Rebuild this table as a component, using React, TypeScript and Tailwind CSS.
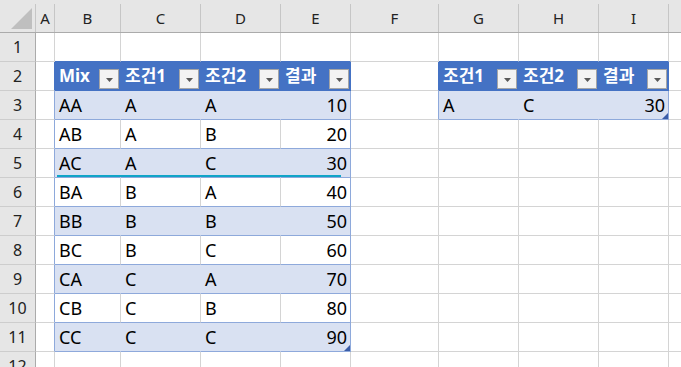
import React from 'react';

type Col = { key: string; label: string; w: string };

const COLS: Col[] = [
  { key: 'A', label: 'A', w: 'w-[19px]' },
  { key: 'B', label: 'B', w: 'w-[66px]' },
  { key: 'C', label: 'C', w: 'w-[80px]' },
  { key: 'D', label: 'D', w: 'w-[80px]' },
  { key: 'E', label: 'E', w: 'w-[70px]' },
  { key: 'F', label: 'F', w: 'w-[88px]' },
  { key: 'G', label: 'G', w: 'w-[80px]' },
  { key: 'H', label: 'H', w: 'w-[80px]' },
  { key: 'I', label: 'I', w: 'w-[70px]' },
  // only a sliver of J is on screen, its letter sits past the edge
  { key: 'J', label: '', w: 'w-[60px]' },
];

const ROWS = [1, 2, 3, 4, 5, 6, 7, 8, 9, 10, 11, 12];

// table ranges, column index into COLS (A = 0)
const TABLES = [
  { r0: 2, r1: 11, c0: 1, c1: 4 },
  { r0: 2, r1: 3, c0: 6, c1: 8 },
];

const CELLS: Record<string, string> = {
  B2: 'Mix', C2: '조건1', D2: '조건2', E2: '결과',
  G2: '조건1', H2: '조건2', I2: '결과',
  G3: 'A', H3: 'C', I3: '30',
};
['AA', 'AB', 'AC', 'BA', 'BB', 'BC', 'CA', 'CB', 'CC'].forEach((mix, i) => {
  const r = i + 3;
  CELLS['B' + r] = mix;
  CELLS['C' + r] = mix[0];
  CELLS['D' + r] = mix[1];
  CELLS['E' + r] = String((i + 1) * 10);
});

const RB = {
  head: 'border-r-[#4472c4]',
  edge: 'border-r-[#8ea9db]',
  band: 'border-r-[#d9e1f2]',
  grid: 'border-r-[#d4d4d4]',
};
const BB = {
  head: 'border-b-[#4472c4]',
  edge: 'border-b-[#8ea9db]',
  grid: 'border-b-[#d4d4d4]',
};

function findTable(r: number, c: number) {
  return TABLES.find(t => r >= t.r0 && r <= t.r1 && c >= t.c0 && c <= t.c1);
}

function FilterButton() {
  return (
    <div className="w-[20px] h-[20px] mr-[1px] mb-[1px] shrink-0 border border-[#a6a6a6] bg-[#f3f3f3] flex items-center justify-center">
      <svg width="7" height="4" viewBox="0 0 7 4" className="mt-[1px]">
        <path d="M0 0h7L3.5 4z" fill="#595959" />
      </svg>
    </div>
  );
}

function ResizeHandle() {
  return (
    <svg width="6" height="6" viewBox="0 0 6 6" className="absolute right-0 bottom-0">
      <path d="M6 0V6H0z" fill="#3a5da8" />
    </svg>
  );
}

function Cell({ r, c }: { r: number; c: number }) {
  const col = COLS[c];
  const t = findTable(r, c);
  const right = findTable(r, c + 1);
  const below = findTable(r + 1, c);
  const value = CELLS[col.key + r];
  const isHead = !!t && r === t.r0;
  const banded = !!t && !isHead && (r - t.r0) % 2 === 1;

  let rb = RB.grid;
  if (t) rb = isHead ? RB.head : c === t.c1 ? RB.edge : banded ? RB.band : RB.grid;
  else if (right) rb = r === right.r0 ? RB.head : RB.edge;

  let bb = BB.grid;
  if (t) bb = isHead ? BB.head : BB.edge;
  else if (below) bb = BB.head;

  const bg = isHead ? 'bg-[#4472c4]' : banded ? 'bg-[#d9e1f2]' : 'bg-white';
  const isNum = !!value && /^\d+$/.test(value);
  const corner = !!t && r === t.r1 && c === t.c1;

  return (
    <div className={`relative h-full shrink-0 border-r border-b ${col.w} ${rb} ${bb} ${bg}`}>
      {isHead ? (
        <div className="h-full flex items-end justify-between">
          <span className="pl-[4px] pb-[2px] font-bold text-white text-[17px] leading-[24px] whitespace-nowrap">{value}</span>
          <FilterButton />
        </div>
      ) : value ? (
        <div className={`h-full flex items-end px-[3px] pb-[2px] ${isNum ? 'justify-end' : 'justify-start pl-[4px]'}`}>
          <span className="text-[18px] leading-[24px] text-black whitespace-nowrap">{value}</span>
        </div>
      ) : null}
      {corner && <ResizeHandle />}
    </div>
  );
}

export default function App() {
  return (
    <div className="relative w-[681px] h-[367px] overflow-hidden bg-white font-['Noto_Sans','Noto_Sans_CJK_KR',sans-serif]">
      {/* column headers */}
      <div className="flex h-[33px]">
        <div className="w-[36px] shrink-0 flex flex-col bg-[#e6e6e6] border-b border-b-[#ababab]">
          <div className="mt-[4px] flex-1 border-r border-r-[#c6c6c6] flex items-end justify-end pr-[3px] pb-[3px]">
            <svg width="21" height="21" viewBox="0 0 21 21">
              <path d="M21 0V21H0z" fill="#bfbfbf" />
            </svg>
          </div>
        </div>
        {COLS.map(col => (
          <div key={col.key} className={`${col.w} shrink-0 flex flex-col bg-[#e6e6e6] border-b border-b-[#ababab]`}>
            <div className="mt-[4px] flex-1 border-r border-r-[#c6c6c6] flex items-center justify-center text-[15px] text-[#222]">
              {col.label}
            </div>
          </div>
        ))}
      </div>

      {ROWS.map(r => (
        <div key={r} className="flex h-[29px]">
          <div className="w-[36px] shrink-0 bg-[#e6e6e6] border-r border-b border-r-[#ababab] border-b-[#cdcdcd] flex items-center justify-center text-[16px] text-[#222]">
            {r}
          </div>
          {COLS.map((col, c) => (
            <Cell key={col.key} r={r} c={c} />
          ))}
        </div>
      ))}

      {/* teal underline marking row 5 */}
      <div className="absolute left-[57px] top-[175px] w-[284px] h-[2px] bg-[#10a4c8]" />
    </div>
  );
}
